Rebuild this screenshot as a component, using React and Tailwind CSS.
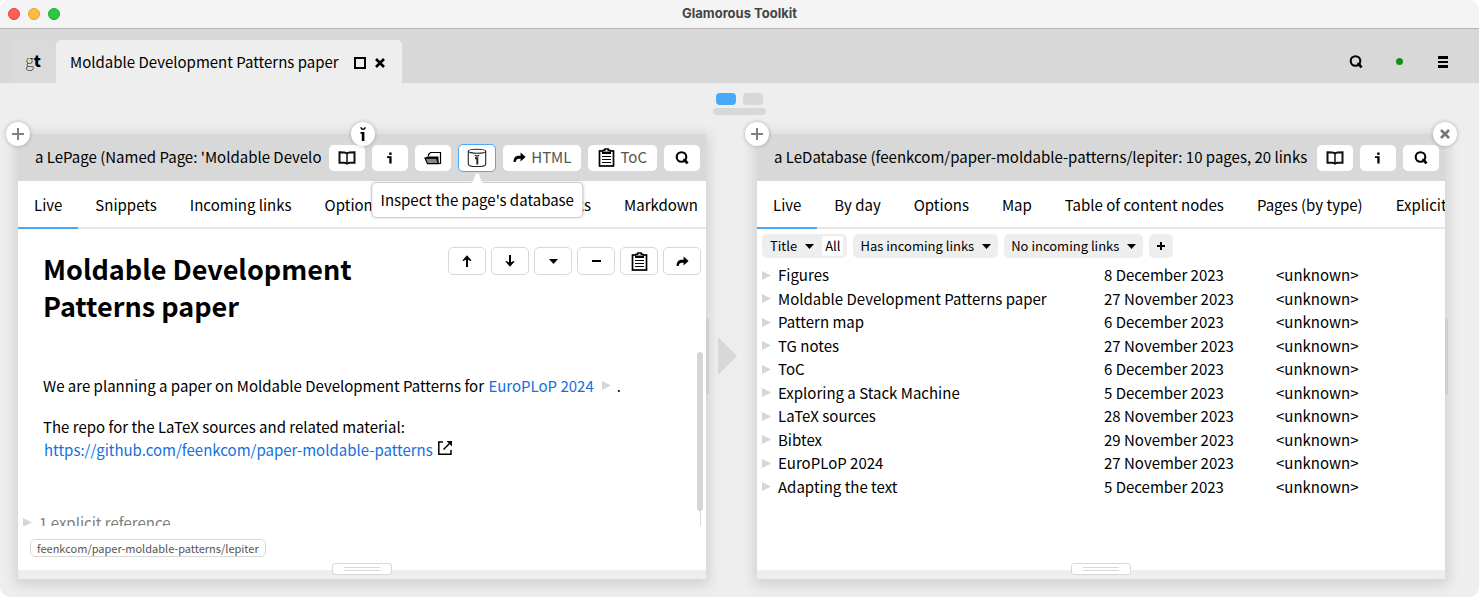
const BookIcon = () => (
  <svg width="18" height="14" viewBox="0 0 18 14" fill="none" stroke="#111" strokeWidth="2" aria-hidden="true">
    <path d="M9 2.400C7.500 1.400 5 1.200 1.500 1.200v10.600h4.500c1.400 0 2.400.2 3 .8.600-.6 1.600-.8 3-.8h4.500V1.200C13 1.200 10.500 1.400 9 2.400z" />
    <path d="M9 2.400V13" strokeWidth="1.500" />
  </svg>
);

const InfoIcon = () => (
  <svg width="8" height="12" viewBox="0 0 8 12" aria-hidden="true">
    <rect x="3.200" y="0.500" width="2.400" height="2.400" />
    <path d="M1 4.200h4.600V11.500H3.300V6H1z" />
  </svg>
);

const BreveIcon = () => (
  <svg width="8" height="14" viewBox="0 0 8 14" aria-hidden="true">
    <path d="M1.300.3h1.500c.2.900.6 1.200 1.300 1.200S5.200 1.200 5.400.3h1.500C6.800 2.100 5.700 3 4.100 3S1.400 2.100 1.300.3z" />
    <path d="M1.500 5h3.900v9H2.800V6.800H1.500z" />
  </svg>
);

const SearchIcon = () => (
  <svg width="14" height="14" viewBox="0 0 14 14" fill="none" stroke="#000" aria-hidden="true">
    <circle cx="6.500" cy="6" r="4.800" strokeWidth="2.100" />
    <path d="M8.200 9l1.800 .3 2.500 3.200" strokeWidth="2.800" />
  </svg>
);

const FolderIcon = () => (
  <svg width="18" height="14" viewBox="0 0 18 14" aria-hidden="true">
    <path d="M4.500 5V3.500L6.500 1.500h10V12.500h-2" fill="none" stroke="#000" strokeWidth="1.200" />
    <path d="M5 4h9.500v1.200H5z" fill="#fff" />
    <path d="M1 7.200h11.500l2 5.500H3.500z" fill="#888" stroke="#000" strokeWidth="1.200" />
    <path d="M3 5.500h11.500v7L12.300 7.500H1z" fill="#000" />
  </svg>
);

const DatabaseIcon = () => (
  <svg width="20" height="20" viewBox="0 0 20 20" fill="none" stroke="#222" strokeWidth="1.100" aria-hidden="true">
    <ellipse cx="10" cy="3.200" rx="8.700" ry="2" />
    <path d="M1.300 3.200v13c0 1.500 3.700 2.300 8.700 2.300s8.700-.8 8.700-2.300v-13" />
    <path d="M8 6.800c.3 1.700 3.700 1.700 4 0" strokeWidth="1.300" />
    <path d="M8 10.200h2.300V16.500" strokeWidth="1.900" />
  </svg>
);

const ShareIcon = () => (
  <svg width="13" height="11" viewBox="0 0 13 11" aria-hidden="true">
    <path d="M7.600.6L12.600 5 7.600 9.400V6.700H5.800C4.200 6.700 3 7.600 2.700 10H.6C.6 5.800 2.500 3.800 5.800 3.800h1.800z" />
  </svg>
);

const ClipboardIcon = () => (
  <svg width="17" height="19" viewBox="0 0 17 19" fill="none" stroke="#000" aria-hidden="true">
    <rect x="1.500" y="3" width="14" height="15" strokeWidth="1.700" />
    <path d="M5 3.500V2.200h1.800V1h3.400v1.200H12v1.300" fill="#fff" strokeWidth="1.400" />
    <path d="M4 5h9" strokeWidth="2" />
    <path d="M4 8.500h9M4 11.500h9M4 14.500h9" strokeWidth="1.200" />
  </svg>
);

const ArrowIcon = ({ className }) => (
  <svg className={className} width="10" height="12" viewBox="0 0 10 12" fill="none" stroke="#000" strokeWidth="2" aria-hidden="true">
    <path d="M5 12V3" />
    <path d="M.4 5.400L5 .2l4.600 5.200-1.300.6L5.600 4.200H4.400L1.700 6z" fill="#000" stroke="none" />
  </svg>
);

const CaretIcon = () => (
  <svg width="9" height="5" viewBox="0 0 9 5" aria-hidden="true">
    <path d="M0 0h9L4.500 5z" />
  </svg>
);

const PlusIcon = ({ size, color }) => (
  <svg width={size} height={size} viewBox="0 0 12 12" fill="none" stroke={color} strokeWidth={size < 10 ? 3 : 2} aria-hidden="true">
    <path d="M6 0v12M0 6h12" />
  </svg>
);

const CrossIcon = ({ color, className }) => (
  <svg className={className} width="10" height="10" viewBox="0 0 10 10" fill="none" stroke={color} strokeWidth="2.600" aria-hidden="true">
    <path d="M1 1l8 8M9 1L1 9" />
  </svg>
);

const Triangle = () => (
  <svg width="9" height="9" viewBox="0 0 9 9" fill="#d5d5d5" aria-hidden="true">
    <path d="M0 0l9 4.500L0 9z" />
  </svg>
);

const HeaderButton = ({ label, active, children }) => (
  <button
    aria-label={label}
    className={
      active
        ? "flex h-7 min-w-[38px] shrink-0 items-center justify-center rounded-[5px] border border-[#4aa8f8] bg-white"
        : label
          ? "flex h-[26px] w-9 shrink-0 items-center justify-center rounded-[5px] bg-white"
          : "flex h-[26px] shrink-0 items-center gap-[5px] rounded-[5px] bg-white px-[10px] text-[#555]"
    }
  >
    {children}
  </button>
);

const RoundButton = ({ label, className, children }) => (
  <button
    aria-label={label}
    className={`absolute z-10 flex size-6 items-center justify-center rounded-full bg-white shadow-[0_0_4px_rgba(0,0,0,0.250)] ${className}`}
  >
    {children}
  </button>
);

const Tabs = ({ items }) => (
  <nav className="flex h-12 shrink-0 gap-px overflow-hidden whitespace-nowrap shadow-[inset_0_-2px_0_#e6e6e6]">
    {items.map((item, i) => (
      <button
        key={item}
        className={
          i === 0
            ? "shrink-0 border-b-2 border-[#4aa8f8] px-4 pt-[2px]"
            : item === "Markdown"
              ? "shrink-0 pr-2 pl-4"
              : item === "Explicit links"
                ? "flex-1 px-4 text-right"
                : "shrink-0 px-4"
        }
      >
        {item}
      </button>
    ))}
  </nav>
);

const PanelFooter = () => (
  <footer className="relative h-[9px] shrink-0 bg-[#eeeeee]">
    <div className="absolute -top-[7px] left-1/2 flex h-3 w-[60px] -translate-x-1/2 flex-col items-center justify-center gap-[2px] rounded-[3px] border border-[#d8d8d8] bg-white">
      <div className="h-px w-9 bg-[#d8d8d8]" />
      <div className="h-px w-9 bg-[#d8d8d8]" />
    </div>
  </footer>
);

const SideHandle = () => <div className="absolute top-[184px] -right-[3px] h-[77px] w-[3px] rounded-r-[2px] bg-[#cfcfcf]" />;

const panelClass = "relative flex min-w-0 flex-col bg-white shadow-[0_3px_12px_3px_rgba(0,0,0,0.120)]";
const panelHeader = "flex h-[47px] shrink-0 items-center gap-[7px] bg-[#d8d8d8] pr-[6px] pl-[17px]";

const PagePanel = () => (
  <section className={panelClass}>
    <RoundButton label="Add pane" className="-top-3 -left-3">
      <PlusIcon size={12} color="#808080" />
    </RoundButton>
    <header className={panelHeader}>
      <h2 className="min-w-0 flex-1 overflow-hidden whitespace-nowrap">
        a LePage (Named Page: 'Moldable Development Patterns paper')
      </h2>
      <div className="relative flex">
        <HeaderButton label="Browse"><BookIcon /></HeaderButton>
        <RoundButton label="Inspect object" className="-top-[23px] left-[22px]">
          <BreveIcon />
        </RoundButton>
      </div>
      <HeaderButton label="Information"><InfoIcon /></HeaderButton>
      <HeaderButton label="Open folder"><FolderIcon /></HeaderButton>
      <div className="relative flex">
        <HeaderButton label="Inspect the page's database" active><DatabaseIcon /></HeaderButton>
        <div
          role="tooltip"
          className="absolute top-[38px] left-1/2 z-20 -translate-x-1/2 rounded-[5px] border border-[#cccccc] bg-white px-2 py-[6px] whitespace-nowrap shadow-[0_0_3px_rgba(0,0,0,0.150)]"
        >
          <svg className="absolute -top-[10px] left-1/2 -translate-x-1/2" width="14" height="11" viewBox="0 0 14 11" fill="#fff" aria-hidden="true">
            <path d="M0 11C3 9 4 5 5 2c1-2 3-2 4 0 1 3 2 7 5 9z" />
          </svg>
          Inspect the page's database
        </div>
      </div>
      <HeaderButton><ShareIcon />HTML</HeaderButton>
      <HeaderButton><ClipboardIcon />ToC</HeaderButton>
      <HeaderButton label="Search"><SearchIcon /></HeaderButton>
    </header>
    <Tabs items={["Live", "Snippets", "Incoming links", "Options", "Explicit links", "Markdown"]} />
    <div className="relative h-[297px] overflow-hidden">
      <div className="flex items-start pt-[18px] pr-[5px] pl-[25px]">
        <h1 className="flex-1 pt-[3px] text-[27px] leading-[37px] font-bold">Moldable Development Patterns paper</h1>
        <div className="flex gap-[5px]">
          {[
            ["Move up", <ArrowIcon />],
            ["Move down", <ArrowIcon className="rotate-180" />],
            ["More", <CaretIcon />],
            ["Remove", <div className="h-[2px] w-[9px] bg-black" />],
            ["Copy", <ClipboardIcon />],
            ["Share", <ShareIcon />],
          ].map(([label, icon]) => (
            <button
              key={label}
              aria-label={label}
              className="flex h-7 w-[38px] items-center justify-center rounded-[5px] border border-[#d8d8d8] bg-white"
            >
              {icon}
            </button>
          ))}
        </div>
      </div>
      <p className="mt-[50px] flex items-center pl-[25px] leading-[23px]">
        We are planning a paper on Moldable Development Patterns for&nbsp;
        <a href="#europlop" className="mr-2 ml-px text-[#1371dc]">EuroPLoP 2024</a>
        <Triangle />
        <span className="ml-[6px]">.</span>
      </p>
      <div className="mt-[18px] pl-[25px] leading-[23px]">
        <p>The repo for the LaTeX sources and related material:</p>
        <a href="https://github.com/feenkcom/paper-moldable-patterns" className="flex items-center gap-[5px] pl-px text-[#1371dc]">
          https://github.com/feenkcom/paper-moldable-patterns
          <svg className="-mt-1" width="14" height="14" viewBox="0 0 14 14" fill="none" stroke="#000" strokeWidth="1.500" aria-hidden="true">
            <path d="M5 .9H.8v12.300H13V9M5.500 8.500L12 2" />
            <path d="M8.500 0H14v5.500z" fill="#000" stroke="none" />
          </svg>
        </a>
      </div>
      <p className="mt-[50px] flex items-center gap-[7px] pl-[5px] leading-[23px] text-[#808080]">
        <Triangle />1 explicit reference
      </p>
      <div className="absolute right-[5px] bottom-0 h-4 w-px bg-[#d8d8d8]" />
      <div className="absolute right-[3px] bottom-[15px] h-[159px] w-[6px] rounded-[3px] bg-[#d5d5d5]" />
    </div>
    <div className="flex flex-1 items-start px-3 pt-[13px]">
      <span className="rounded-[5px] border border-[#d8d8d8] px-[6px] text-[11px] leading-4 text-[#555]">
        feenkcom/paper-moldable-patterns/lepiter
      </span>
    </div>
    <PanelFooter />
    <SideHandle />
    <svg className="absolute top-[203px] -right-[31px]" width="19" height="38" viewBox="0 0 19 38" fill="#d8d8d8" aria-hidden="true">
      <path d="M0 0l19 19L0 38z" />
    </svg>
  </section>
);

const rows = [
  ["Figures", "8 December 2023"],
  ["Moldable Development Patterns paper", "27 November 2023"],
  ["Pattern map", "6 December 2023"],
  ["TG notes", "27 November 2023"],
  ["ToC", "6 December 2023"],
  ["Exploring a Stack Machine", "5 December 2023"],
  ["LaTeX sources", "28 November 2023"],
  ["Bibtex", "29 November 2023"],
  ["EuroPLoP 2024", "27 November 2023"],
  ["Adapting the text", "5 December 2023"],
];

const filterClass = "flex h-6 items-center gap-2 rounded-[5px] bg-[#eeeeee]";

const DatabasePanel = () => (
  <section className={panelClass}>
    <RoundButton label="Add pane" className="-top-3 -left-3">
      <PlusIcon size={12} color="#808080" />
    </RoundButton>
    <RoundButton label="Close pane" className="-top-3 -right-3">
      <CrossIcon color="#777" />
    </RoundButton>
    <header className={panelHeader}>
      <h2 className="min-w-0 flex-1 overflow-hidden whitespace-nowrap">
        a LeDatabase (feenkcom/paper-moldable-patterns/lepiter: 10 pages, 20 links
      </h2>
      <HeaderButton label="Browse"><BookIcon /></HeaderButton>
      <HeaderButton label="Information"><InfoIcon /></HeaderButton>
      <HeaderButton label="Search"><SearchIcon /></HeaderButton>
    </header>
    <Tabs items={["Live", "By day", "Options", "Map", "Table of content nodes", "Pages (by type)", "Explicit references"]} />
    <div className="flex-1">
      <div className="flex gap-[6px] pt-[5px] pl-[5px] text-[13px]">
        <div className={`${filterClass} pr-1 pl-2`}>
          <button className="flex items-center gap-2">Title <CaretIcon /></button>
          <button className="h-5 rounded-[3px] bg-white px-[3px] leading-5">All</button>
        </div>
        <button className={`${filterClass} px-[7px]`}>Has incoming links <CaretIcon /></button>
        <button className={`${filterClass} px-[7px]`}>No incoming links <CaretIcon /></button>
        <button aria-label="Add filter" className={`${filterClass} px-2`}><PlusIcon size={8} color="#000" /></button>
      </div>
      <table className="mt-[5px] w-full table-fixed border-collapse text-left leading-[23px]">
        <colgroup>
          <col className="w-[21px]" />
          <col className="w-[326px]" />
          <col className="w-[172px]" />
          <col />
        </colgroup>
        <tbody>
          {rows.map(([title, date]) => (
            <tr key={title} className="odd:h-6 even:h-[23px]">
              <td className="p-0 pl-[5px]"><Triangle /></td>
              <td className="p-0 align-top">{title}</td>
              <td className="p-0 align-top">{date}</td>
              <td className="p-0 align-top">&lt;unknown&gt;</td>
            </tr>
          ))}
        </tbody>
      </table>
    </div>
    <PanelFooter />
    <SideHandle />
  </section>
);

export default function App() {
  return (
    <div className="flex min-h-screen flex-col overflow-hidden rounded-[10px] bg-[#eeeeee] font-['Noto_Sans_CJK_SC',sans-serif] text-[15px] text-black">
      <header className="flex h-[29px] items-center border-b border-[#b4b4b4] bg-[#f4f4f4] px-2">
        <div className="flex flex-1 gap-2">
          <button aria-label="Close window" className="size-3 rounded-full border border-[#e0443e] bg-[#fe5f57]" />
          <button aria-label="Minimize window" className="size-3 rounded-full border border-[#dea034] bg-[#febb40]" />
          <button aria-label="Zoom window" className="size-3 rounded-full border border-[#1dad2b] bg-[#2bc840]" />
        </div>
        <h1 className="font-['Inter','Liberation_Sans',sans-serif] text-[13px] font-bold text-[#444]">Glamorous Toolkit</h1>
        <div className="flex-1" />
      </header>
      <div className="flex h-[54px] items-end bg-[#d8d8d8] pl-3">
        <button className="flex h-[43px] w-11 items-center justify-center rounded-t-[5px] bg-[#dadada] pr-[2px] pb-1 text-[16px]">
          <span className="font-thin">g</span>
          <span className="font-black">t</span>
        </button>
        <div className="flex h-[43px] items-center rounded-t-[5px] bg-[#eeeeee] pt-[2px] pr-[17px] pl-[14px]">
          <span>Moldable Development Patterns paper</span>
          <button aria-label="Detach tab" className="ml-[15px] size-3 border-2 border-black" />
          <button aria-label="Close tab" className="ml-[9px]"><CrossIcon color="#000" /></button>
        </div>
        <div className="mr-[31px] ml-auto flex h-[43px] items-center">
          <button aria-label="Search"><SearchIcon /></button>
          <div className="ml-[33px] size-[7px] rounded-full bg-[#158f1a]" />
          <button aria-label="Menu" className="ml-[35px] flex w-[10px] flex-col gap-[2px]">
            <span className="h-[3px] bg-black" />
            <span className="h-[2px] bg-black" />
            <span className="h-[3px] bg-black" />
          </button>
        </div>
      </div>
      <div className="flex flex-col items-center gap-[3px] pt-[10px]">
        <div className="flex gap-[7px]">
          <div className="h-3 w-5 rounded-[4px] bg-[#4aa8f8]" />
          <div className="h-3 w-5 rounded-[4px] bg-[#d8d8d8]" />
        </div>
        <div className="h-[7px] w-[53px] rounded-[4px] bg-[#d8d8d8]" />
      </div>
      <main className="mt-[19px] mb-[18px] grid flex-1 grid-cols-2 gap-[51px] pr-[34px] pl-[18px]">
        <PagePanel />
        <DatabasePanel />
      </main>
    </div>
  );
}
